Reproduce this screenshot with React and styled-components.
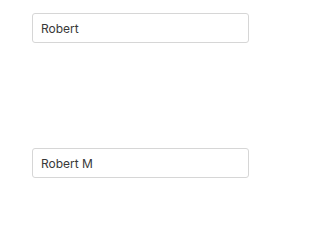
import React from 'react';
import styled, { createGlobalStyle } from 'styled-components';

const GlobalStyle = createGlobalStyle`
  html, body { margin: 0; padding: 0; background: #ffffff; }
  body { font-family: Inter, "Liberation Sans", sans-serif; }
`;

const Page = styled.div`
  width: 250px;
  height: 250px;
  box-sizing: border-box;
  padding: 13px 1px 0 32px;
  display: flex;
  flex-direction: column;
  gap: 105px;
`;

const Field = styled.input`
  box-sizing: border-box;
  width: 217px;
  height: 30px;
  margin: 0;
  padding: 0 8px;
  border: 1px solid #d6d6d6;
  border-radius: 3px;
  background: #fff;
  color: #383838;
  font-family: Inter, "Liberation Sans", sans-serif;
  font-size: 12px;
  outline: none;
`;

const App = () => {
  return (
    <>
      <GlobalStyle />
      <Page>
        <Field defaultValue="Robert" />
        <Field defaultValue="Robert M" />
      </Page>
    </>
  );
};

export default App;
